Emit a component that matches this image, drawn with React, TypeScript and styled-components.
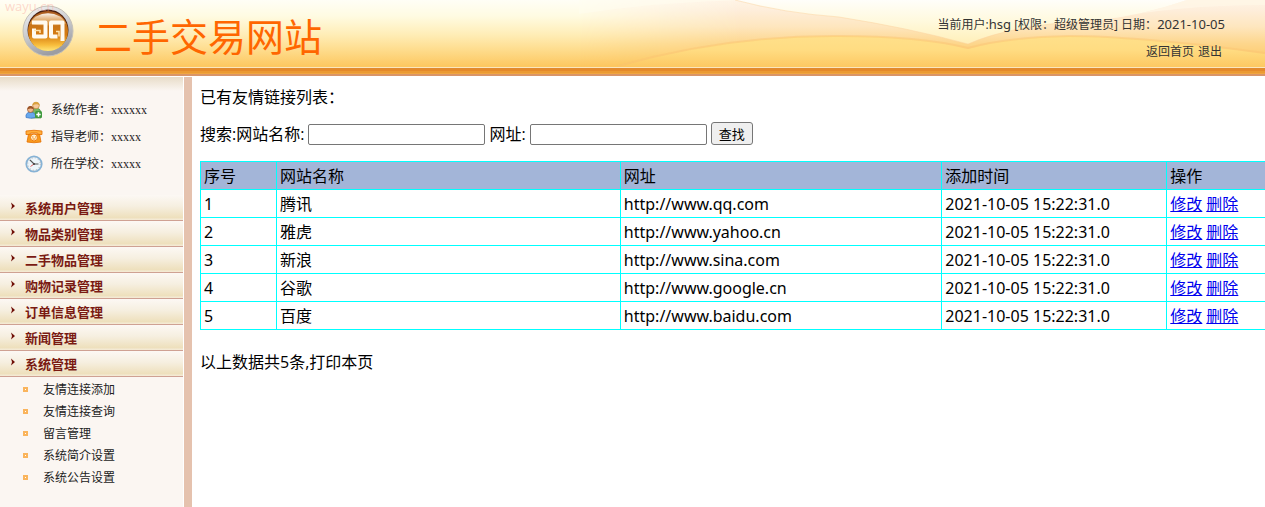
import React from "react";
import styled, { createGlobalStyle } from "styled-components";

const GlobalStyle = createGlobalStyle`
  *, *::before, *::after { box-sizing: border-box; }
  body {
    margin: 0;
    background: #fff;
    color: #000;
    font-family: "Open Sans", "Noto Sans CJK SC", sans-serif;
    font-size: 16px;
    line-height: 20px;
  }
  ul { list-style: none; margin: 0; padding: 0; }
`;

const Page = styled.div`
  display: flex;
  flex-direction: column;
  min-height: 100vh;
  overflow-x: hidden;
`;

const Header = styled.header`
  position: relative;
  display: flex;
  justify-content: space-between;
  height: 67px;
  background: linear-gradient(#fffef6 0%, #fffbe2 24%, #ffedb6 52%, #fedb8a 76%, #fdc862 98%);
`;

const Waves = styled.svg`
  position: absolute;
  top: 0;
  right: 0;
  width: 686px;
  height: 67px;
`;

const Stripe = styled.div`
  height: 10px;
  flex: none;
  background: linear-gradient(
    #fbe6bd 0 1px, #e08a30 1px 2px, #e5892a 2px 4px, #eb9a33 4px 6px,
    #f0a63f 6px 7px, #d99569 7px 9px, #fff 9px 10px
  );
`;

const Brand = styled.div`
  position: relative;
  display: flex;
  align-items: flex-start;
  gap: 19px;
  padding: 4px 0 0 22px;
`;

const Watermark = styled.span`
  position: absolute;
  top: 0;
  left: 5px;
  font-size: 13px;
  line-height: 13px;
  color: rgba(250, 170, 160, 0.45);
`;

const SiteTitle = styled.h1`
  margin: 0;
  padding-top: 8px;
  font-size: 38px;
  line-height: 48px;
  font-weight: 400;
  color: #ff6600;
`;

const UserPanel = styled.div`
  position: relative;
  display: flex;
  flex-direction: column;
  align-items: flex-end;
  padding: 14px 40px 0 0;
  font-size: 12px;
  line-height: 20px;
  color: #333;
`;

const UserLine = styled.div`
  white-space: nowrap;
`;

const Latin = styled.span<{ $size: number }>`
  font-family: "Noto Sans", sans-serif;
  font-size: ${(p) => p.$size}px;
`;

const HeaderLinks = styled.nav`
  display: flex;
  gap: 4px;
  padding: 7px 3px 0 0;
`;

const PlainLink = styled.a`
  color: inherit;
  text-decoration: none;
`;

const Body = styled.div`
  display: flex;
  flex: 1;
`;

const Sidebar = styled.aside`
  width: 183px;
  flex: none;
  font-size: 12px;
  color: #222;
  background: linear-gradient(#e8dcc8, #fbf6f2 14px);
`;

const Divider = styled.div`
  width: 9px;
  flex: none;
  border-left: 1px solid #fff;
  background: #e5c2ae;
`;

const InfoList = styled.ul`
  && { padding: 19px 0 18px 25px; }
`;

const InfoRow = styled.li`
  display: flex;
  align-items: center;
  gap: 8px;
  height: 27px;
  font-family: "Liberation Serif", "Noto Sans CJK SC", serif;

  svg { width: 18px; height: 18px; flex: none; }
`;

const MenuLink = styled.a`
  display: flex;
  align-items: center;
  gap: 10px;
  height: 26px;
  padding: 1px 0 0 11px;
  border-bottom: 1px solid #cfa193;
  background: linear-gradient(#fcf8f4 0%, #f6efe0 45%, #eee0bd 90%, #f5ecd9 100%);
  color: #7a1a12;
  font-size: 13px;
  font-weight: 700;
  text-decoration: none;

  svg { width: 4px; height: 8px; margin-bottom: 4px; }
`;

const SubMenu = styled.ul`
  && { padding: 2px 0 16px 23px; }
`;

const SubItem = styled.li`
  display: flex;
  align-items: center;
  gap: 15px;
  height: 22px;

  &::before {
    content: "";
    width: 5px;
    height: 5px;
    border: 2px solid #fab45c;
    background: #fff;
    margin-bottom: 2px;
  }
`;

const Main = styled.main`
  flex: 1;
  min-width: 0;
  padding: 10px 0 0 8px;
`;

const Line = styled.p`
  margin: 0;
`;

const SearchForm = styled.form`
  display: flex;
  align-items: center;
  gap: 4px;
  margin: 15px 0 16px;
  height: 23px;
`;

const TextField = styled.input`
  width: 177px;
  height: 21px;
  padding: 1px 2px;
  border: 1px solid #767676;
  border-radius: 2px;
  font: 13px "Open Sans", "Noto Sans CJK SC", sans-serif;
  margin-top: 1px;
`;

const SearchButton = styled.button`
  width: 42px;
  height: 23px;
  padding: 0;
  border: 1px solid #767676;
  border-radius: 3px;
  background: #efefef;
  color: #000;
  font: 13px "Noto Sans CJK SC", sans-serif;
  line-height: 20px;
`;

const Table = styled.table`
  width: 100%;
  table-layout: fixed;
  border-collapse: collapse;
  margin-bottom: 22px;

  th, td {
    height: 28px;
    padding: 0 3px;
    border: 1px solid #00ffff;
    font-weight: 400;
    text-align: left;
    white-space: nowrap;
  }
  th:last-child, td:last-child { border-right: 0; }
  thead tr { background: #a3b5d8; }
`;

const Col = styled.col<{ $w?: string }>`
  width: ${(p) => p.$w ?? "auto"};
`;

const ActionLink = styled.a`
  color: #0000ee;
  text-decoration: underline;
  margin-right: 4px;
`;

const Logo = () => (
  <svg width="53" height="53" viewBox="0 0 53 53" aria-hidden="true">
    <defs>
      <linearGradient id="ring" x1="0" y1="0" x2="0.4" y2="1">
        <stop offset="0" stopColor="#f4f4f4" />
        <stop offset="0.5" stopColor="#cfd0d4" />
        <stop offset="1" stopColor="#9c9da3" />
      </linearGradient>
      <linearGradient id="ball" x1="0" y1="0" x2="0" y2="1">
        <stop offset="0" stopColor="#a85a20" />
        <stop offset="0.35" stopColor="#c8741a" />
        <stop offset="0.6" stopColor="#d67c10" />
        <stop offset="0.85" stopColor="#f8bd3c" />
        <stop offset="1" stopColor="#ffe67a" />
      </linearGradient>
      <linearGradient id="shine" x1="0" y1="0" x2="0" y2="1">
        <stop offset="0" stopColor="#fff" stopOpacity="0.95" />
        <stop offset="1" stopColor="#f5b860" stopOpacity="0.35" />
      </linearGradient>
    </defs>
    <circle cx="26" cy="27" r="25" fill="url(#ring)" stroke="#c4c0b8" />
    <circle cx="26" cy="26" r="20.500" fill="#4a2010" />
    <circle cx="26" cy="27" r="20" fill="url(#ball)" />
    <path d="M8 20a18.500 14 0 0 1 36 0q-18 3-36 0z" fill="url(#shine)" />
    <g fill="none" stroke="#fffaf0" strokeWidth="4" strokeLinejoin="round">
      <path d="M10 18.500H23.500V32.500H12V24.500" />
      <path d="M40.500 37V18.500H29V32.500H35.500" />
    </g>
    <path d="M12 26.500h6v2.500M37 32.500v-5h-3" fill="none" stroke="#ffe3ad" strokeWidth="1.500" />
  </svg>
);

const UsersIcon = () => (
  <svg viewBox="0 0 18 18" aria-hidden="true">
    <path d="M6 17V11q1-4 5-4t5 4v6z" fill="#75b565" stroke="#4d9147" strokeWidth=".7" />
    <circle cx="11" cy="4.5" r="3.3" fill="#f6c99b" stroke="#c58a35" strokeWidth=".7" />
    <path d="M7.4 4.5Q7.6 1 11 1t3.7 3.5Q12 2.2 7.4 4.5z" fill="#d9a23e" />
    <path d="M1 16.5V14q1-3 4.500-3t5 3v2.500q-5 1.500-9.500 0z" fill="#67a8ec" stroke="#3974c4" strokeWidth=".7" />
    <circle cx="5.500" cy="8.500" r="3" fill="#efb78c" stroke="#96572f" strokeWidth=".7" />
    <path d="M2.400 8.500Q2.500 5 5.500 5t3.200 3.500Q6 6.500 2.400 8.500z" fill="#9b5427" />
    <rect x="10" y="10" width="7" height="7" rx="1.500" fill="#3f9a3e" />
    <path d="M13.500 11.300v4.400M11.300 13.500h4.400" stroke="#fff" strokeWidth="1.500" />
  </svg>
);

const PhoneIcon = () => (
  <svg viewBox="0 0 18 18" aria-hidden="true">
    <path d="M3.500 6h11l1.500 8q-7 1.500-14 0z" fill="#f89a1c" stroke="#e56f00" strokeWidth=".8" />
    <path d="M1 3Q9 1.500 17 3v3.500h-3.500L12.500 5h-7L4.500 6.500H1z" fill="#ffae3b" stroke="#e56f00" strokeWidth=".8" />
    <circle cx="9" cy="9.500" r="3.500" fill="#fff0d0" stroke="#f07c0c" />
    <path d="M7 9h1.500M10 9h1.500M7.500 11h3" stroke="#ef8417" strokeWidth="1.200" />
  </svg>
);

const ClockIcon = () => (
  <svg viewBox="0 0 18 18" aria-hidden="true">
    <circle cx="9" cy="9" r="7.700" fill="#edf5fb" stroke="#86b2d5" strokeWidth="1.800" />
    <circle cx="9" cy="9" r="6.300" fill="none" stroke="#bdbdbd" strokeWidth="1.200" strokeDasharray="1 2.300" />
    <path d="M5 5l4 4h4.500" fill="none" stroke="#555" strokeWidth="1.100" />
    <path d="M9 9l-3.500 2.500" stroke="#d33" strokeWidth=".8" />
    <circle cx="9" cy="9" r="1.100" fill="#444" />
  </svg>
);

const Arrow = () => (
  <svg viewBox="0 0 4 8" aria-hidden="true">
    <path d="M0 0.500L4 4L0 7.500L1 4z" fill="#701008" />
  </svg>
);

const HeaderWaves = () => (
  <Waves viewBox="0 0 686 67" aria-hidden="true">
    <defs>
      <linearGradient id="veil" x1="0" y1="0" x2="0" y2="67" gradientUnits="userSpaceOnUse">
        <stop offset="0" stopColor="#fff4e6" />
        <stop offset="0.15" stopColor="#feeedb" />
        <stop offset="0.4" stopColor="#fee6be" />
        <stop offset="0.65" stopColor="#fdd68c" />
        <stop offset="1" stopColor="#fdc45c" />
      </linearGradient>
      <linearGradient id="fade" x1="0" y1="0" x2="160" y2="0" gradientUnits="userSpaceOnUse">
        <stop offset="0" stopColor="#fff" stopOpacity="0" />
        <stop offset="1" stopColor="#fff" />
      </linearGradient>
      <mask id="fadeMask">
        <rect width="686" height="67" fill="url(#fade)" />
      </mask>
      <linearGradient id="hill" x1="0" y1="36" x2="0" y2="67" gradientUnits="userSpaceOnUse">
        <stop offset="0" stopColor="#ffe08a" />
        <stop offset="0.45" stopColor="#ffdc82" />
        <stop offset="1" stopColor="#fdc862" />
      </linearGradient>
      <linearGradient id="sky" x1="0" y1="0" x2="0" y2="44" gradientUnits="userSpaceOnUse">
        <stop offset="0" stopColor="#fffefa" />
        <stop offset="0.5" stopColor="#fff9dc" />
        <stop offset="1" stopColor="#ffefb8" />
      </linearGradient>
    </defs>
    <rect width="686" height="67" fill="url(#veil)" mask="url(#fadeMask)" />
    <path d="M0 0H165Q80 2 0 14z" fill="#fffdf0" opacity=".5" />
    <path d="M156 0Q205 13 260 17Q330 28 389 44Q435 24 520 20Q565 15 608 0z" fill="url(#sky)" />
    <path d="M156 0Q205 13 260 17Q330 28 389 44Q435 24 520 20" fill="none" stroke="#fbd3a0" strokeWidth="1" opacity=".5" />
    <path d="M520 20Q600 5 686 5V0H608Q565 15 520 20z" fill="#fff6e6" opacity=".8" />
    <path d="M39 67Q150 35 261 36Q340 36 389 49Q430 37 490 36Q560 36 686 54V67z" fill="url(#hill)" />
    <path d="M39 66Q150 35 261 36Q340 36 389 48Q430 37 490 36Q560 36 686 53" fill="none" stroke="#fbc472" strokeWidth="2" opacity=".45" />
  </Waves>
);

const infoRows = [
  { icon: <UsersIcon />, text: "系统作者：xxxxxx" },
  { icon: <PhoneIcon />, text: "指导老师：xxxxx" },
  { icon: <ClockIcon />, text: "所在学校：xxxxx" },
];

const menu = [
  "系统用户管理",
  "物品类别管理",
  "二手物品管理",
  "购物记录管理",
  "订单信息管理",
  "新闻管理",
  "系统管理",
];

const subMenu = ["友情连接添加", "友情连接查询", "留言管理", "系统简介设置", "系统公告设置"];

const sites = [
  { name: "腾讯", url: "http://www.qq.com" },
  { name: "雅虎", url: "http://www.yahoo.cn" },
  { name: "新浪", url: "http://www.sina.com" },
  { name: "谷歌", url: "http://www.google.cn" },
  { name: "百度", url: "http://www.baidu.com" },
];

export default function App() {
  return (
    <Page>
      <GlobalStyle />
      <Header>
        <HeaderWaves />
        <Brand>
          <Logo />
          <Watermark>wayu.cn</Watermark>
          <SiteTitle>二手交易网站</SiteTitle>
        </Brand>
        <UserPanel>
          <UserLine>
            当前用户:<Latin $size={13}>hsg</Latin> [权限：超级管理员] 日期：
            <Latin $size={13}>2021-10-05</Latin>
          </UserLine>
          <HeaderLinks>
            <PlainLink href="#home">返回首页</PlainLink>
            <PlainLink href="#exit">退出</PlainLink>
          </HeaderLinks>
        </UserPanel>
      </Header>
      <Stripe />
      <Body>
        <Sidebar>
          <InfoList>
            {infoRows.map((row) => (
              <InfoRow key={row.text}>
                {row.icon}
                <span>{row.text}</span>
              </InfoRow>
            ))}
          </InfoList>
          <nav>
            {menu.map((label) => (
              <MenuLink href="#menu" key={label}>
                <Arrow />
                {label}
              </MenuLink>
            ))}
            <SubMenu>
              {subMenu.map((label) => (
                <SubItem key={label}>
                  <PlainLink href="#sub">{label}</PlainLink>
                </SubItem>
              ))}
            </SubMenu>
          </nav>
        </Sidebar>
        <Divider />
        <Main>
          <Line>已有友情链接列表：</Line>
          <SearchForm onSubmit={(e) => e.preventDefault()}>
            <label htmlFor="siteName">搜索:网站名称:</label>
            <TextField id="siteName" type="text" />
            <label htmlFor="siteUrl">网址:</label>
            <TextField id="siteUrl" type="text" />
            <SearchButton type="submit">查找</SearchButton>
          </SearchForm>
          <Table>
            <colgroup>
              <Col $w="76px" />
              <Col $w="32.3%" />
              <Col $w="30.2%" />
              <Col $w="225px" />
              <Col />
            </colgroup>
            <thead>
              <tr>
                <th>序号</th>
                <th>网站名称</th>
                <th>网址</th>
                <th>添加时间</th>
                <th>操作</th>
              </tr>
            </thead>
            <tbody>
              {sites.map((site, i) => (
                <tr key={site.url}>
                  <td>
                    <Latin $size={16}>{i + 1}</Latin>
                  </td>
                  <td>{site.name}</td>
                  <td>
                    <Latin $size={16}>{site.url}</Latin>
                  </td>
                  <td>
                    <Latin $size={16}>2021-10-05 15:22:31.0</Latin>
                  </td>
                  <td>
                    <ActionLink href="#edit">修改</ActionLink>
                    <ActionLink href="#delete">删除</ActionLink>
                  </td>
                </tr>
              ))}
            </tbody>
          </Table>
          <Line>
            以上数据共5条,<PlainLink href="#print">打印本页</PlainLink>
          </Line>
        </Main>
      </Body>
    </Page>
  );
}
